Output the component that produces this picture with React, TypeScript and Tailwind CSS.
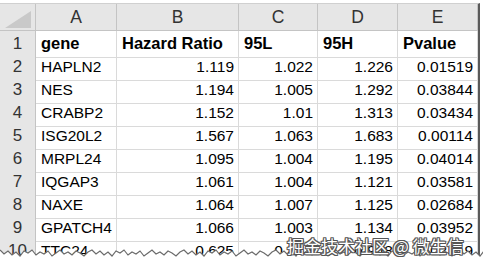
import React from "react"

const cols = ["A", "B", "C", "D", "E"]

const rows: (string | number)[][] = [
  ["gene", "Hazard Ratio", "95L", "95H", "Pvalue"],
  ["HAPLN2", "1.119", "1.022", "1.226", "0.01519"],
  ["NES", "1.194", "1.005", "1.292", "0.03844"],
  ["CRABP2", "1.152", "1.01", "1.313", "0.03434"],
  ["ISG20L2", "1.567", "1.063", "1.683", "0.00114"],
  ["MRPL24", "1.095", "1.004", "1.195", "0.04014"],
  ["IQGAP3", "1.061", "1.004", "1.121", "0.03581"],
  ["NAXE", "1.064", "1.007", "1.125", "0.02684"],
  ["GPATCH4", "1.066", "1.003", "1.134", "0.03952"],
  ["TTC24", "0.625", "0.412", "0.948", "0.02719"],
]

// jagged torn-paper edge along the bottom
const tornPoints = (() => {
  const pts: string[] = []
  const offs = [0, 4, 1, 5, 2, 6, 1, 3, 0, 5, 2, 4, 1, 6, 3, 0, 4, 2, 5, 1, 3, 6, 2]
  for (let i = 0, x = 0; x <= 484; i++, x += 4) {
    pts.push(`${x},${250 + offs[i % offs.length]}`)
  }
  return pts
})()

const grid = "grid grid-cols-[36px_81px_122px_79px_80px_80px]"

export default function App() {
  return (
    <div className="relative w-[483px] h-[266px] bg-white overflow-hidden font-['Liberation_Sans',Arial,sans-serif] text-[15.5px] text-black">
      <div className="pt-[3px] w-[480px]">
        <div className="border-t border-[#d0d0d0] border-r-2 border-r-[#5a5a5a] w-[480px]">
          {/* column letters */}
          <div className={`${grid} h-[27px] bg-[#e6e6e6]`}>
            <div className="relative border-r border-b border-[#c4c4c4]">
              <svg className="absolute left-[5px] top-[7px]" width="26" height="17" viewBox="0 0 26 17">
                <polygon points="0,17 26,17 26,0" fill="#c9c9c9" />
              </svg>
            </div>
            {cols.map((c) => (
              <div
                key={c}
                className="flex items-center justify-center border-r border-b border-[#c4c4c4] text-[#333] text-[17.5px]"
              >
                {c}
              </div>
            ))}
          </div>

          {rows.map((row, r) => (
            <div key={r} className={`${grid} h-[23px]`}>
              <div className="flex items-center justify-center bg-[#e6e6e6] border-r border-b border-[#c4c4c4] text-[#333] text-[17px]">
                {r + 1}
              </div>
              {row.map((cell, c) => (
                <div
                  key={c}
                  className={`flex items-center border-r border-b border-[#dadada] px-[5px] whitespace-nowrap overflow-hidden ${
                    r === 0 ? "font-bold text-[16.5px] justify-start" : c === 0 ? "justify-start" : "justify-end pr-[4px]"
                  }`}
                >
                  {cell}
                </div>
              ))}
            </div>
          ))}
        </div>
      </div>

      {/* torn edge */}
      <svg className="absolute left-0 top-0" width="483" height="266" viewBox="0 0 483 266">
        <polygon points={`0,266 ${tornPoints.join(" ")} 483,266`} fill="#ffffff" />
        <polyline points={tornPoints.join(" ")} fill="none" stroke="#6b6b6b" strokeWidth="1.2" />
      </svg>

      {/* watermark */}
      <div className="absolute left-[287px] top-[236px] text-[17px] leading-[20px] text-white font-['Noto_Sans_CJK_SC',sans-serif] [text-shadow:1px_0_0_#555,-1px_0_0_#555,0_1px_0_#555,0_-1px_0_#555,1px_1px_0_#555,-1px_-1px_0_#555,1px_-1px_0_#555,-1px_1px_0_#555]">
        掘金技术社区 @ 微生信
      </div>
    </div>
  )
}
